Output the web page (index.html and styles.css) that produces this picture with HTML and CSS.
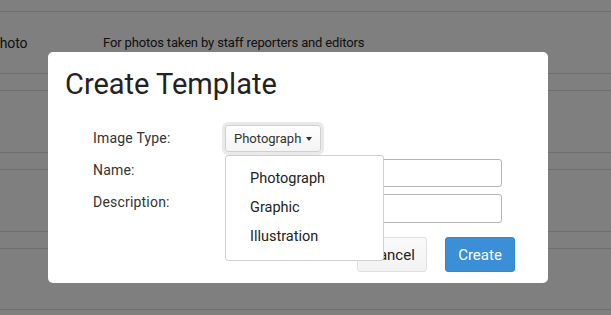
FILE: index.html
```html
<!DOCTYPE html>
<html>
<head>
<meta charset="utf-8">
<link rel="stylesheet" href="styles.css">
</head>
<body>
<div class="page">
  <div class="table">
    <div class="row tall">
      <div class="cell name">Photo</div>
      <div class="cell desc">For photos taken by staff reporters and editors</div>
    </div>
    <div class="row short"></div>
    <div class="row tall">
      <div class="cell name"></div>
      <div class="cell desc"></div>
    </div>
    <div class="row short"></div>
    <div class="row tall">
      <div class="cell name"></div>
      <div class="cell desc"></div>
    </div>
    <div class="row short"></div>
    <div class="row tall last">
      <div class="cell name"></div>
      <div class="cell desc">For graphics made by your team, typically for print</div>
    </div>
  </div>
</div>
<div class="overlay"></div>
<div class="modal">
  <h1 class="title">Create Template</h1>
  <div class="form">
    <label class="label">Image Type:</label>
    <div class="control">
      <button class="select-btn">Photograph <span class="caret"></span></button>
      <ul class="menu">
        <li>Photograph</li>
        <li>Graphic</li>
        <li>Illustration</li>
      </ul>
    </div>
    <label class="label label-mid">Name:</label>
    <input class="input" type="text">
    <label class="label label-high">Description:</label>
    <input class="input" type="text">
  </div>
  <div class="footer">
    <button class="btn btn-cancel">Cancel</button>
    <button class="btn btn-create">Create</button>
  </div>
</div>
</body>
</html>
```
FILE: styles.css
```css
* { box-sizing: border-box; }
html, body { margin: 0; padding: 0; }
body {
  width: 611px;
  height: 315px;
  overflow: hidden;
  background: #fff;
  font-family: Roboto, "Noto Sans", sans-serif;
  color: #333;
  position: relative;
}
.page { padding-top: 11px; }
.table { width: 100%; }
.row { border-top: 1px solid #dcdcdc; display: flex; align-items: center; }
.tall { height: 62px; }
.short { height: 17px; }
.row.last { border-bottom: 1px solid #dcdcdc; align-items: flex-start; padding-top: 15px; }
.cell { font-size: 13.5px; color: #222; line-height: 20px; letter-spacing: -0.1px; }
.name { width: 103px; flex: none; text-indent: -9px; font-size: 14px; }
.desc { white-space: nowrap; font-size: 13px; letter-spacing: -0.15px; }
.overlay {
  position: absolute;
  inset: 0;
  background: rgba(0, 0, 0, 0.5);
}
.modal {
  position: absolute;
  left: 48px;
  top: 52px;
  width: 500px;
  height: 231px;
  background: #fff;
  border-radius: 5px;
  padding: 14px 33px 0 17px;
  display: flex;
  flex-direction: column;
}
.title {
  margin: 0;
  font-weight: 400;
  font-size: 29px;
  line-height: 36px;
  color: #222;
  letter-spacing: 0;
}
.form {
  margin-top: 23px;
  padding-left: 28px;
  display: grid;
  grid-template-columns: 132px 277px;
  grid-template-rows: 27px 28px 29px;
  row-gap: 7px;
}
.label {
  font-size: 14px;
  color: #333;
  padding-top: 3px;
  line-height: 20px;
  letter-spacing: 0.2px;
}
.label-mid { padding-top: 1px; }
.label-high { margin-top: -2px; padding-top: 0; }
.control { position: relative; }
.select-btn {
  height: 27px;
  padding: 0 8px;
  font-family: inherit;
  font-size: 13px;
  color: #333;
  background: linear-gradient(#fff, #f4f4f4);
  border: 1px solid #d0d0d0;
  border-radius: 3px;
  box-shadow: 0 0 0 3px #e9e9e9;
  display: inline-flex;
  align-items: center;
  gap: 5px;
}
.caret {
  width: 0;
  height: 0;
  border-left: 3.5px solid transparent;
  border-right: 3.5px solid transparent;
  border-top: 4px solid #333;
}
.menu {
  position: absolute;
  left: 0;
  top: 30px;
  width: 159px;
  margin: 0;
  padding: 8px 0 9px;
  list-style: none;
  background: #fff;
  border: 1px solid #cfcfcf;
  border-radius: 3px;
  z-index: 2;
}
.menu li {
  height: 29px;
  line-height: 29px;
  padding-left: 24px;
  font-size: 14.5px;
  color: #222;
}
.input {
  height: 100%;
  width: 100%;
  border: 1px solid #b5b5b5;
  border-radius: 3px;
  background: #fff;
  font-family: inherit;
}
.footer {
  margin-top: auto;
  margin-bottom: 11px;
  display: flex;
  justify-content: flex-end;
  gap: 18px;
}
.btn {
  height: 35px;
  width: 70px;
  border-radius: 3px;
  font-family: inherit;
  font-size: 15px;
}
.btn-cancel {
  background: linear-gradient(#fafafa, #f2f2f2);
  border: 1px solid #e0e0e0;
  color: #222;
}
.btn-create {
  background: #3a8fd6;
  border: 1px solid #3587cc;
  color: #fff;
}
```
